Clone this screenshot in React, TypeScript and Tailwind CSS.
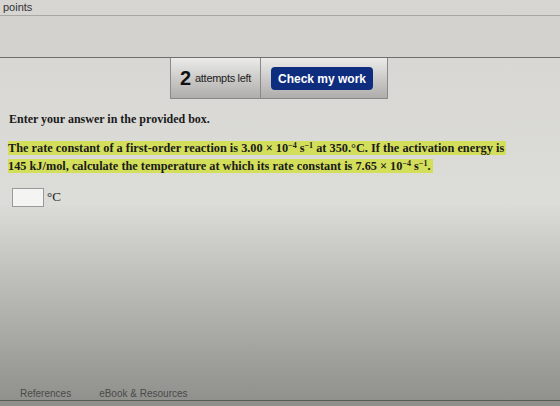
export default function App() {
  const serif = { fontFamily: '"Liberation Serif", "Times New Roman", serif' }
  return (
    <div
      className="w-[560px] h-[406px] overflow-hidden flex flex-col bg-linear-to-b from-[#d6d5d2] via-[#dcdcd8] to-[#8e8e8a] text-[#222]"
      style={{ fontFamily: '"Liberation Sans", Arial, sans-serif' }}>
      <div className="h-[16px] shrink-0 border-b border-[#a8a7a4] pl-[3px] text-[11px] leading-[14px] text-[#333]">
        points
      </div>
      <div className="h-[42px] shrink-0 border-b border-[#6f6e6b] bg-[#d3d2cf]" />
      <div className="h-[42px] shrink-0 flex pl-[170px]">
        <div className="flex h-[41px] border-x border-b border-[#8a8987] bg-linear-to-b from-[#ebebe9] to-[#aeadab]">
          <div className="w-[90px] flex items-center justify-center gap-[4px] border-r border-[#8a8987]">
            <span className="text-[20px] font-bold text-[#111]">2</span>
            <span className="text-[11px] text-[#222] tracking-[-0.3px]">attempts left</span>
          </div>
          <div className="w-[126px] flex items-start pl-[10px] pt-[9px]">
            <button className="w-[102px] h-[23px] rounded-[4px] bg-[#0f2d7e] text-white text-[12px] font-bold">
              Check my work
            </button>
          </div>
        </div>
      </div>
      <div className="pl-[9px] pt-[10px] text-[12px] font-bold text-[#1a1a1a]" style={serif}>
        Enter your answer in the provided box.
      </div>
      <div className="pl-[8px] pt-[11px] text-[12.3px] font-bold leading-[18px] text-[#1a1a1a]" style={serif}>
        <span className="bg-[#d3df5a] box-decoration-clone pr-[2px] whitespace-nowrap">
          The rate constant of a first-order reaction is 3.00 × 10
          <span className="relative -top-[4px] text-[8px] leading-none">−4</span> s
          <span className="relative -top-[4px] text-[8px] leading-none">−1</span> at 350.°C. If the activation energy
          is
          <br />
          145 kJ/mol, calculate the temperature at which its rate constant is 7.65 × 10
          <span className="relative -top-[4px] text-[8px] leading-none">−4</span> s
          <span className="relative -top-[4px] text-[8px] leading-none">−1</span>.
        </span>
      </div>
      <div className="flex items-center pl-[12px] pt-[13px] gap-[3px]">
        <div className="w-[32px] h-[19px] bg-[#f4f4f2] border border-[#9a9a98]" />
        <span className="text-[13px] text-[#222] -mt-[2px]" style={serif}>
          °C
        </span>
      </div>
      <div className="flex-1" />
      <div className="h-[14px] shrink-0 flex pl-[20px] gap-[28px] text-[10px] leading-[14px] text-[#4a4a4a] border-b border-[#5a5a57] mb-[5px]">
        <span>References</span>
        <span>eBook &amp; Resources</span>
      </div>
    </div>
  )
}
